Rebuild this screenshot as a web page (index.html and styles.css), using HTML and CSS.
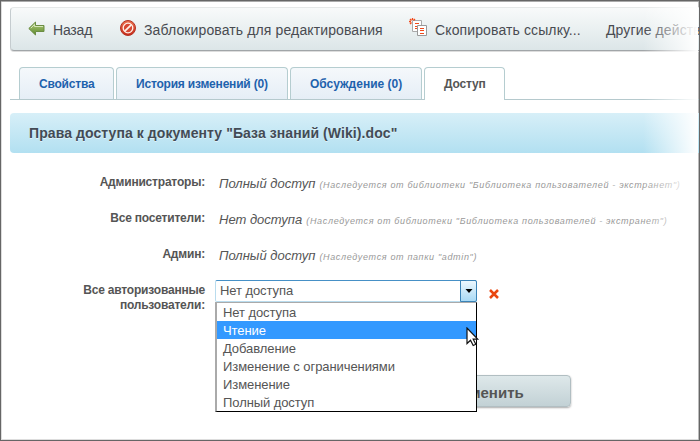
FILE: index.html
```html
<!DOCTYPE html>
<html lang="ru">
<head>
<meta charset="utf-8">
<title>Права доступа</title>
<link rel="stylesheet" href="styles.css">
</head>
<body>
<div class="window">
  <nav class="toolbar">
    <a class="tool back"><svg width="17" height="16" viewBox="0 0 17 16"><defs><linearGradient id="g" x2="0" y2="1"><stop stop-color="#b4d080"/><stop offset="1" stop-color="#5c8729"/></linearGradient></defs><path d="M.8 7.500 7.500 1v3.500h8.500v6H7.500V14z" fill="url(#g)" stroke="#6b8d43"/><path d="M2.800 7.200 6.500 3.500v2h8.500" fill="none" stroke="#d5e5b7"/></svg><span>Назад</span></a>
    <a class="tool lock"><svg width="16" height="16" viewBox="0 0 16 16"><defs><linearGradient id="r" x2="0" y2="1"><stop stop-color="#ed7350"/><stop offset="1" stop-color="#c52917"/></linearGradient></defs><circle cx="8" cy="8" r="7.500" fill="url(#r)" stroke="#b43324"/><circle cx="8" cy="8" r="4.800" fill="#d64833" stroke="#fff0e8" stroke-width="1.300"/><path d="m4.800 11.200 6.400-6.400" stroke="#fff0e8" stroke-width="1.700"/></svg><span>Заблокировать для редактирования</span></a>
    <a class="tool copy"><svg width="19" height="19" viewBox="0 0 19 19"><path d="M3.500 2.500h9v11h-9z" fill="#fff" stroke="#aaa"/><path d="M6 5.500h4M6 8.500h2M6 10.500h2" stroke="#f14a1b"/><path d="M8.500 7.500h9v10h-9z" fill="#fff" stroke="#999"/><path d="M11 10.500h4M11 12.500h4M11 15.500h4" stroke="#f14a1b" stroke-width="1.200"/><path d="M3.500 0v2M0 3.500h2M1 1l1.500 1.500M6 1 4.500 2.500M1 6l1.500-1.500" stroke="#f14a1b" stroke-width="1.300"/></svg><span>Скопировать ссылку...</span></a>
    <a class="tool other"><span>Другие действия</span></a>
  </nav>
  <div class="tabs">
    <a class="tab tab-props"><span>Свойства</span></a>
    <a class="tab tab-history"><span>История изменений (0)</span></a>
    <a class="tab tab-talk"><span>Обсуждение (0)</span></a>
    <a class="tab tab-access active"><span>Доступ</span></a>
  </div>
  <h1 class="title"><span>Права доступа к документу "База знаний (Wiki).doc"</span></h1>
  <div class="rights">
    <div class="row"><div class="label">Администраторы:</div><div class="value"><em>Полный доступ</em><small>(Наследуется от библиотеки "Библиотека пользователей - экстранет")</small></div></div>
    <div class="row"><div class="label">Все посетители:</div><div class="value"><em>Нет доступа</em><small>(Наследуется от библиотеки "Библиотека пользователей - экстранет")</small></div></div>
    <div class="row"><div class="label">Админ:</div><div class="value"><em>Полный доступ</em><small>(Наследуется от папки "admin")</small></div></div>
    <div class="row"><div class="label">Все авторизованные пользователи:</div>
      <div class="select">
        <div class="field">Нет доступа<span class="drop"><svg width="8" height="4" viewBox="0 0 8 4"><path d="M.5 0h7L4 4z"/></svg></span></div>
        <div class="menu">
          <div class="option">Нет доступа</div>
          <div class="option chosen">Чтение</div>
          <div class="option">Добавление</div>
          <div class="option">Изменение с ограничениями</div>
          <div class="option">Изменение</div>
          <div class="option">Полный доступ</div>
        </div>
        <svg class="cursor" width="14" height="20" viewBox="0 0 14 20"><path d="M1 1v15.500l3.500-3.300 2.700 5.300 2.600-1.200-2.600-5.100h4.500z" fill="#fff" stroke="#111" stroke-width="1.200"/></svg>
      </div>
      <svg class="remove" width="10" height="10" viewBox="0 0 10 10"><path d="m1 1 8 8M9 1 1 9" stroke="#e94711" stroke-width="2.500"/></svg>
    </div>
  </div>
  <div class="actions"><div class="apply">Применить</div></div>
  <div class="fade"></div>
</div>
</body>
</html>
```
FILE: styles.css
```css
* { box-sizing: border-box; }
body { margin: 0; font-family: "Liberation Sans", Arial, sans-serif; color: #555; }
.window { position: relative; width: 700px; height: 441px; overflow: hidden; border: 1px solid #666; padding: 6px 0 0 9px; background: #fff; box-shadow: inset 0 1px #aaa, inset 1px 0 #ddd, inset -1px 0 #bbb, inset 0 -1px #ddd; }
.window span { white-space: nowrap; }
.toolbar { display: flex; height: 44px; border: 1px solid #e5e8e8; border-right: 0; border-bottom-color: #a1a5a8; border-left-color: #c5cccf; border-radius: 4px 0 0 4px; background: linear-gradient(#f8fafa, #dce6e8); box-shadow: 0 1px #ddd; font-size: 14px; letter-spacing: .12px; color: #494b51; }
.tool { display: flex; align-items: center; flex: none; }
.tool svg { flex: none; }
.tool span { padding-top: 2px; }
.back { padding-left: 17px; width: 109px; gap: 8px; letter-spacing: -.2px; }
.lock { width: 289px; gap: 8px; }
.lock svg { margin-bottom: 2px; }
.copy { width: 197px; gap: 7px; }
.copy svg { margin-bottom: 4px; }
.tabs { display: flex; gap: 2px; height: 33px; margin-top: 16px; padding-left: 9px; border-bottom: 1px solid #b5c9cd; font-size: 12px; font-weight: bold; letter-spacing: -.2px; color: #1e62ad; }
.tab { height: 32px; display: flex; align-items: center; padding: 1px 0 0 19px; border: 1px solid #b5cdd0; border-bottom: 0; border-radius: 4px 4px 0 0; background: linear-gradient(#f5f8fb, #e5eef6); }
.tab-props { width: 95px; }
.tab-history { width: 172px; }
.tab-talk { width: 132px; letter-spacing: 0; }
.tab-access { width: 81px; }
.tab.active { height: 33px; padding-top: 0; background: #fff; color: #555; }
.title { display: flex; align-items: center; height: 40px; margin: 13px 0 0; padding-left: 19px; border-radius: 4px 0 0 4px; background: linear-gradient(#d7eff8, #b2e0f1); font-size: 14px; letter-spacing: .08px; color: #434b55; text-shadow: 0 1px #dff2fa; }
.rights { padding-top: 20px; }
.row { display: flex; height: 36px; align-items: flex-start; }
.label { width: 195px; flex: none; text-align: right; padding: 2px 0 0 40px; font-size: 12px; line-height: 15px; font-weight: bold; letter-spacing: -.2px; }
.value { display: flex; align-items: baseline; gap: 4px; padding: 2px 0 0 14px; white-space: nowrap; font-size: 13px; line-height: 17px; }
.value small { font-size: 9px; letter-spacing: .66px; font-style: italic; color: #999; }
.select { position: relative; width: 262px; margin: -1px 0 0 10px; font-size: 13px; letter-spacing: -.08px; }
.field { display: flex; justify-content: space-between; height: 22px; border: 1px solid #b9dcee; border-top-color: #4690c6; border-radius: 2px; padding-left: 4px; line-height: 20px; }
.drop { display: flex; align-items: center; justify-content: center; width: 17px; margin: -1px -1px -1px 0; border: 1px solid #3b83b7; border-radius: 0 2px 2px 0; background: linear-gradient(#edf8fe, #a9daf5); }
.menu { position: absolute; z-index: 2; left: 0; top: 22px; width: 262px; height: 110px; background: #fff; border: 1px solid #000; border-left: 2px solid #aaa; border-top: 1px solid #aaa; }
.option { height: 18px; padding-left: 6px; line-height: 19px; white-space: nowrap; }
.chosen { background: #3399ff; color: #fff; }
.cursor { position: absolute; z-index: 3; left: 251px; top: 47px; }
.remove { margin: 8px 0 0 12px; }
.actions { padding: 58px 0 0 383px; }
.apply { width: 178px; height: 32px; border: 1px solid #b1bec2; border-radius: 4px; background: linear-gradient(#dee8ea, #c2d1d5); box-shadow: 0 1px 2px #aaa; text-align: center; font-size: 15px; font-weight: bold; line-height: 34px; color: #555; }
.fade { position: absolute; z-index: 4; right: 1px; top: 2px; width: 55px; height: 240px; background: linear-gradient(90deg, #fff0, #fff); }
```
